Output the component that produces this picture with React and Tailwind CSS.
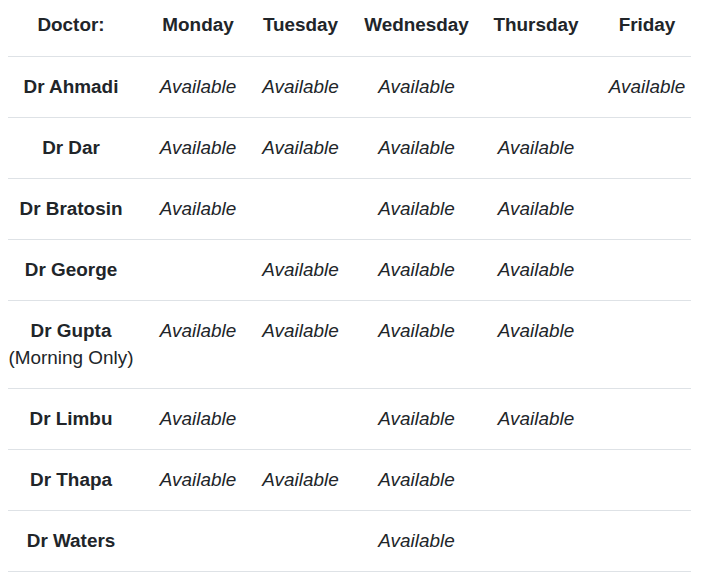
import React from 'react';

const days = ['Monday', 'Tuesday', 'Wednesday', 'Thursday', 'Friday'];

const doctors = [
  { name: 'Dr Ahmadi', days: [1, 1, 1, 0, 1] },
  { name: 'Dr Dar', days: [1, 1, 1, 1, 0] },
  { name: 'Dr Bratosin', days: [1, 0, 1, 1, 0] },
  { name: 'Dr George', days: [0, 1, 1, 1, 0] },
  { name: 'Dr Gupta', note: '(Morning Only)', days: [1, 1, 1, 1, 0] },
  { name: 'Dr Limbu', days: [1, 0, 1, 1, 0] },
  { name: 'Dr Thapa', days: [1, 1, 1, 0, 0] },
  { name: 'Dr Waters', days: [0, 0, 1, 0, 0] },
];

// per-column padding nudges so the centres line up with the screenshot
const colPad = ['', 'pl-[13px]', '', '', '', 'pl-[12px]'];

const rowGrid =
  'grid grid-cols-[126px_115px_103px_129px_110px_100px] w-[683px] border-b border-[#dee2e6]';

const App = () => {
  return (
    <div className="min-h-screen bg-white pl-[8px] font-['Liberation_Sans',Arial,sans-serif] text-[18.9px] leading-[27.6px] text-[#212529]">
      {/* Header */}
      <div className={`${rowGrid} h-[57px]`}>
        <div className="pt-[11px] text-center font-bold whitespace-nowrap">Doctor:</div>
        {days.map((d, i) => (
          <div key={d} className={`pt-[11px] text-center font-bold whitespace-nowrap ${colPad[i + 1]}`}>
            {d}
          </div>
        ))}
      </div>

      {/* Rows */}
      {doctors.map((doc) => (
        <div key={doc.name} className={rowGrid}>
          <div className="py-[16.15px] text-center whitespace-nowrap">
            <div className="font-bold">{doc.name}</div>
            {doc.note && <div>{doc.note}</div>}
          </div>
          {doc.days.map((a, i) => (
            <div key={i} className={`py-[16.15px] text-center italic whitespace-nowrap ${colPad[i + 1]}`}>
              {a ? 'Available' : ''}
            </div>
          ))}
        </div>
      ))}
    </div>
  );
};

export default App;
